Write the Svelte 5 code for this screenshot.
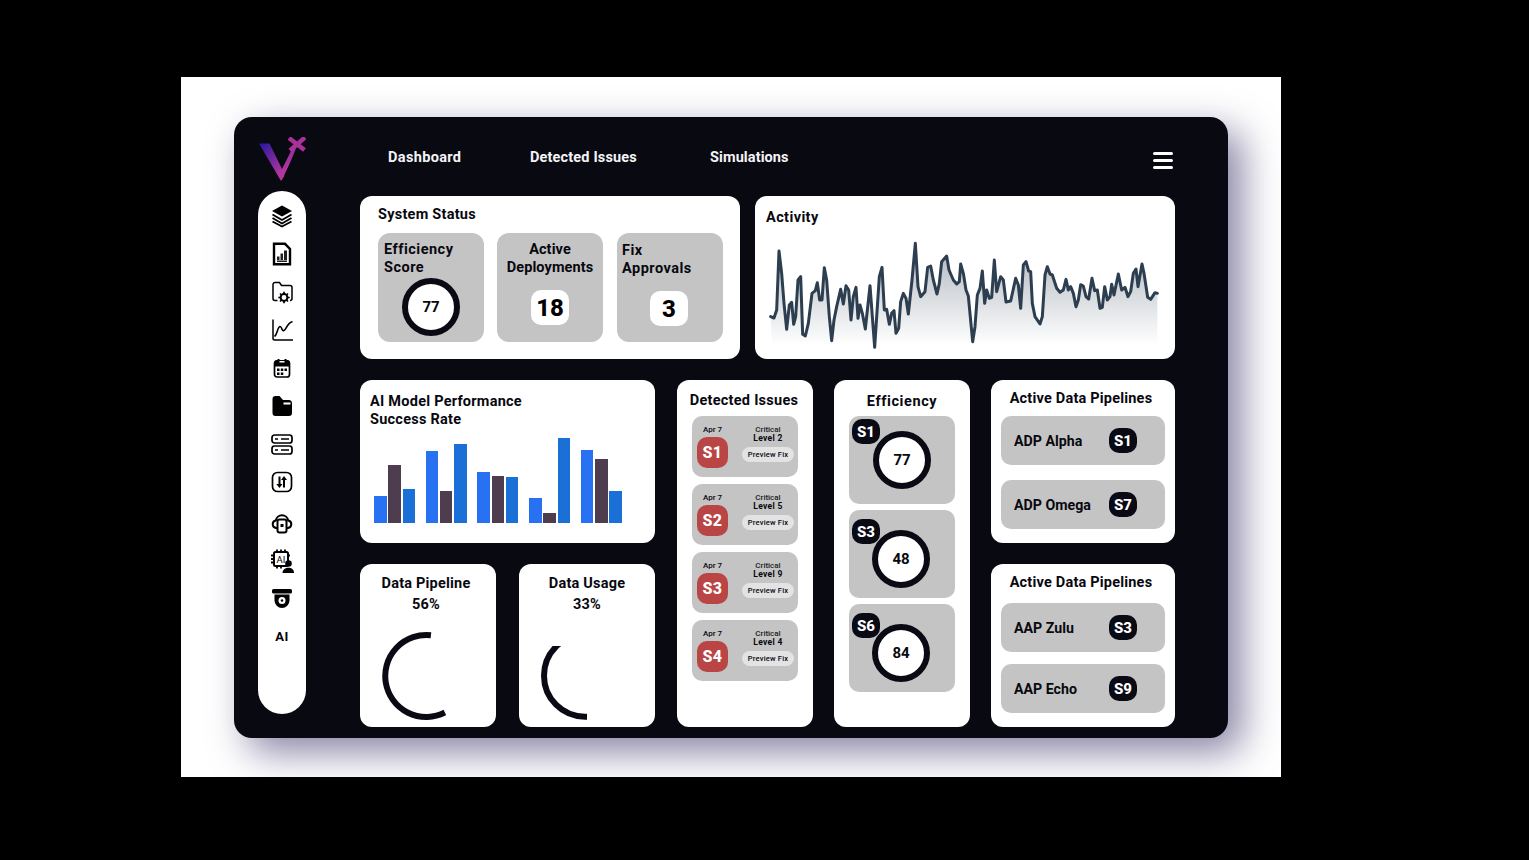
<script>
  const pts = [[62,380],[72,384],[80,360],[87,183],[95,250],[102,340],[110,418],[118,345],[125,337],[131,403],[137,380],[144,270],[152,260],[158,433],[166,438],[175,400],[186,310],[196,302],[202,278],[209,330],[216,330],[223,233],[230,270],[238,380],[245,452],[252,390],[260,350],[272,298],[280,342],[288,287],[296,300],[303,390],[310,320],[318,292],[324,385],[330,345],[337,370],[346,417],[360,287],[374,472],[388,260],[396,232],[403,360],[410,358],[418,403],[425,370],[432,362],[438,430],[446,415],[452,335],[460,310],[468,325],[475,372],[486,270],[496,160],[504,290],[512,320],[525,305],[533,232],[542,228],[550,270],[561,312],[568,280],[575,215],[590,198],[597,240],[610,270],[620,282],[628,275],[632,222],[640,250],[648,300],[655,318],[668,455],[675,410],[682,315],[690,295],[697,243],[704,340],[710,300],[718,325],[725,322],[733,210],[740,305],[752,260],[760,270],[768,336],[782,333],[797,265],[805,285],[812,355],[820,225],[828,215],[836,243],[842,245],[847,340],[855,380],[870,402],[877,380],[885,255],[892,230],[900,252],[907,255],[920,295],[930,307],[940,300],[948,268],[955,300],[962,290],[970,310],[978,350],[985,330],[992,284],[1000,288],[1008,320],[1016,327],[1026,265],[1034,302],[1042,300],[1050,355],[1057,352],[1064,290],[1072,330],[1080,320],[1085,283],[1092,315],[1105,252],[1115,300],[1125,292],[1134,320],[1142,305],[1150,250],[1158,237],[1164,290],[1176,222],[1182,250],[1193,322],[1202,328],[1215,308],[1222,310]];
  const line = pts.map((p) => p.join(',')).join(' ');
  const area = `66,465 ${line} 1222,465`;

  const bars = [[82,175,101],[215,96,237],[153,140,137],[74,30,254],[218,192,95]];
  const issues = [['S1',2],['S2',5],['S3',9],['S4',4]];
  const eff = [['S1',77],['S3',48],['S6',84]];
</script>

<div class="page">
  <div class="frame">
    <div class="panel">
      <aside class="side">
        <svg class="logo" viewBox="0 0 48 46" aria-label="logo">
          <defs>
            <linearGradient id="vg" x1="0" y1="0" x2="1" y2="1">
              <stop offset="0" stop-color="#23189c" />
              <stop offset=".7" stop-color="#b4359f" />
            </linearGradient>
          </defs>
          <path d="M1 6.500H11.500L24 32L34 12L38 11.500L27 38L23 44Z" fill="url(#vg)" />
          <path d="M26.500 38.500L36 19" stroke="#090912" stroke-width="1" fill="none" />
          <path d="M31 1L46.500 13M47 .5L32 13.500" stroke="#a8329a" stroke-width="4.500" fill="none" />
        </svg>
        <nav class="pill">
          <svg class="ico" viewBox="0 0 24 24"><path d="M12 1.500L22 7L12 12.500L2 7Z" /><path class="ln" d="M2.500 10.500L12 16L21.500 10.500M2.500 14L12 19.500L21.500 14M2.500 17.500L12 22.500L21.500 17.500" stroke-width="1.900" /></svg>
          <svg class="ico" viewBox="0 0 24 24"><path class="ln" d="M4 1.800H15L20 7V22.200H4Z" stroke-width="2.400" /><path d="M7 18H9.500V14.500H7ZM10.500 18H13V11.500H10.500ZM14 18H17V8.500H14ZM7 18.500H17V20H7Z" fill="#222" /></svg>
          <svg class="ico" viewBox="0 0 24 24"><path class="ln" d="M7.500 20.500H5A2 2 0 0 1 3 18.500V4.500A2 2 0 0 1 5 2.500H9.500L11.500 5.500H20A2 2 0 0 1 22 7.500V18.500A2 2 0 0 1 20 20.500H20" stroke-width="1.500" /><circle class="ln" cx="14" cy="17.500" r="3.400" stroke-width="2" /><path class="ln" d="M14 11.800V14M14 21V23.200M8.300 17.500H10.500M17.500 17.500H19.700M10 13.500L11.500 15M16.500 20L18 21.500M10 21.500L11.500 20M16.500 15L18 13.500" stroke-width="1.700" /></svg>
          <svg class="ico" viewBox="0 0 24 24"><path class="ln" d="M3 1.500V20.500Q3 22 5 22H23" stroke-width="1.500" /><path class="ln" d="M4.500 18.500C7 17 7.500 9 10 8.500C12 8.200 11.500 13.500 14 12.500C16.500 11.500 16.500 5.500 22.500 3.500" stroke-width="1.600" /></svg>
          <svg class="ico" viewBox="0 0 24 24"><rect class="ln" x="4.500" y="5" width="15" height="16" rx="2.500" stroke-width="1.700" /><path d="M4 7A3 3 0 0 1 7 4H17A3 3 0 0 1 20 7V10.500H4Z" /><rect x="7.500" y="3" width="2" height="3.500" /><rect x="14.500" y="3" width="2" height="3.500" /><rect class="wh" x="9.500" y="5" width="5" height="1.500" /><path d="M7 12.500h2.500v2.500h-2.500zM10.800 12.500h2.500v2.500h-2.500zM14.500 12.500h2.500v2.500h-2.500zM7 16.500h2.500v2.500h-2.500zM10.800 16.500h2.500v2.500h-2.500z" /></svg>
          <svg class="ico" viewBox="0 0 24 24"><path d="M2.500 5A3 3 0 0 1 5.500 2H9.500L13 6H19.500A3 3 0 0 1 22 9V19A3 3 0 0 1 19 22H5.500A3 3 0 0 1 2.500 19Z" /><rect class="wh" x="13.500" y="8.500" width="7" height="2" /></svg>
          <svg class="ico" viewBox="0 0 24 24"><rect class="ln" x="2" y="3" width="20" height="8" rx="2.500" stroke-width="1.700" /><rect class="ln" x="2" y="14" width="20" height="8" rx="2.500" stroke-width="1.700" /><path class="ln" d="M5 7H8M11 7H19M5 18H8M11 18H19" stroke-width="1.400" /></svg>
          <svg class="ico" viewBox="0 0 24 24"><rect class="ln" x="2.500" y="2.500" width="19" height="19" rx="5" stroke-width="1.700" /><path d="M9 6.500V14H6.800L10 18L13 14H11V6.500ZM13.500 10H11.500L14.500 6L17.500 10H15.500V17.500H13.500Z" transform="translate(-.5 0)" /></svg>
          <svg class="ico gap" viewBox="0 0 24 24"><path class="ln" d="M7.500 17H6A3.800 3.800 0 0 1 5.800 9.500A6.300 6.300 0 0 1 18.200 9.500A3.800 3.800 0 0 1 18 17H16.500" stroke-width="2" /><rect class="ln" x="7.500" y="8.500" width="9" height="13" rx="2" stroke-width="2" /><rect x="10.500" y="13" width="3" height="3" /></svg>
          <svg class="ico" viewBox="0 0 24 24"><rect class="ln" x="4" y="3" width="14" height="14" rx="1.500" stroke-width="2" /><path class="ln" d="M7 .5V3M11 .5V3M15 .5V3M7 17V19.500M11 17V19.500M1 6.500H4M1 10H4M1 13.500H4M18 6.500H20" stroke-width="1.800" /><text class="chip" x="11" y="13.700" text-anchor="middle">AI</text><circle cx="18.500" cy="14.500" r="3.300" /><path d="M12.500 24C12.500 20.500 15.500 18.800 18.500 18.800C21.500 18.800 24 20.500 24 24Z" /></svg>
          <svg class="ico" viewBox="0 0 24 24"><rect x="2" y="2" width="20" height="4.500" rx="1.500" /><path d="M4.500 7.500H19.500V13.500A7.500 7.500 0 0 1 4.500 13.500Z" /><circle class="wh" cx="12" cy="13.500" r="3.500" /><circle cx="12" cy="13.500" r="1.200" /></svg>
          <span class="ai">AI</span>
        </nav>
      </aside>

      <main class="main">
        <header class="top">
          <nav class="links">
            <span class="l1">Dashboard</span>
            <span class="l2">Detected Issues</span>
            <span class="l3">Simulations</span>
          </nav>
          <div class="burger"><i></i><i></i><i></i></div>
        </header>

        <section class="row1">
          <div class="card status">
            <h3>System Status</h3>
            <div class="tiles">
              <div class="tile t1">
                <p>Efficiency<br />Score</p>
                <div class="ring">77</div>
              </div>
              <div class="tile t2">
                <p class="ctr">Active<br />Deployments</p>
                <div class="num">18</div>
              </div>
              <div class="tile t3">
                <p>Fix<br />Approvals</p>
                <div class="num">3</div>
              </div>
            </div>
          </div>
          <div class="card activity">
            <h3>Activity</h3>
            <svg class="spark" viewBox="48 141 1200 351">
              <defs>
                <linearGradient id="ag" gradientUnits="userSpaceOnUse" x1="0" y1="160" x2="0" y2="465">
                  <stop offset="0" stop-color="#2c3e50" stop-opacity=".38" />
                  <stop offset="1" stop-color="#2c3e50" stop-opacity="0" />
                </linearGradient>
              </defs>
              <polygon points={area} fill="url(#ag)" />
              <polyline points={line} fill="none" stroke="#2c3e50" stroke-width="9" stroke-linejoin="round" stroke-linecap="round" />
            </svg>
          </div>
        </section>

        <section class="row2">
          <div class="col-left">
            <div class="card model">
              <h3>AI Model Performance<br />Success Rate</h3>
              <div class="chart">
                {#each bars as g}
                  <div class="group">
                    {#each g as h, i}
                      <div class="bar b{i}" style="height:{h / 3}px"></div>
                    {/each}
                  </div>
                {/each}
              </div>
            </div>
            <div class="gauges">
              <div class="card gauge g1">
                <h3>Data Pipeline<br />56%</h3>
                <svg class="arc a1" width="66" height="94" viewBox="0 0 66 94"><path d="M50.940 5.260A41 41 0 1 0 64.900 82.500" /></svg>
              </div>
              <div class="card gauge">
                <h3>Data Usage<br />33%</h3>
                <svg class="arc a2" width="47" height="76" viewBox="0 0 47 76"><circle cx="45" cy="29.700" r="41" /></svg>
              </div>
            </div>
          </div>

          <div class="card issues">
            <h3>Detected Issues</h3>
            {#each issues as [s, lvl]}
              <div class="issue">
                <div class="i-left">
                  <span class="date">Apr 7</span>
                  <span class="sev">{s}</span>
                </div>
                <div class="i-right">
                  <span class="crit">Critical</span>
                  <span class="lvl">Level {lvl}</span>
                  <span class="fix">Preview Fix</span>
                </div>
              </div>
            {/each}
          </div>

          <div class="card effic">
            <h3>Efficiency</h3>
            {#each eff as [s, v], i}
              <div class="etile" class:low={i > 0}>
                <span class="tag">{s}</span>
                <div class="ring">{v}</div>
              </div>
            {/each}
          </div>

          <div class="col-right">
            <div class="card pipes">
              <h3>Active Data Pipelines</h3>
              <div class="prow p-gap"><span>ADP Alpha</span><b class="tag">S1</b></div>
              <div class="prow"><span>ADP Omega</span><b class="tag">S7</b></div>
            </div>
            <div class="card pipes second">
              <h3>Active Data Pipelines</h3>
              <div class="prow p-gap2"><span>AAP Zulu</span><b class="tag">S3</b></div>
              <div class="prow"><span>AAP Echo</span><b class="tag">S9</b></div>
            </div>
          </div>
        </section>
      </main>
    </div>
  </div>
</div>

<style>
  :global(body) { margin: 0; background: #000; }
  .page {
    box-sizing: border-box;
    height: 860px;
    padding: 77px 0 0 181px;
    background: #000;
    overflow: hidden;
    font-family: Roboto, "Liberation Sans", sans-serif;
    color: #08080f;
  }
  .frame {
    box-sizing: border-box;
    width: 1100px;
    height: 700px;
    padding: 40px 0 0 53px;
    background: #fff;
    overflow: hidden;
  }
  .panel {
    display: flex;
    width: 994px;
    height: 621px;
    border-radius: 18px;
    background: #090912;
    box-shadow: 14px 14px 38px rgba(38, 30, 90, 0.55);
  }
  h3, p { margin: 0; font-weight: 700; }

  .side { width: 126px; padding: 20px 0 0 24px; box-sizing: border-box; flex: none; }
  .logo { display: block; width: 48px; height: 46px; margin-bottom: 8px; }
  .pill {
    display: flex;
    flex-direction: column;
    align-items: center;
    box-sizing: border-box;
    width: 48px;
    height: 523px;
    padding-top: 13px;
    border-radius: 24px;
    background: #fff;
  }
  .ico { display: block; flex: none; width: 24px; height: 24px; margin-bottom: 14px; fill: #000; }
  .ico.gap { margin-top: 3px; }
  .ln { fill: none; stroke: #000; }
  .wh { fill: #fff; }
  .chip { font-size: 9.500px; font-weight: 400; fill: #000; }
  .ai { font-size: 13px; font-weight: 700; line-height: 14px; margin-top: 5px; color: #000; letter-spacing: 0.5px; }

  .main { width: 815px; flex: none; }
  .top { display: flex; justify-content: space-between; align-items: flex-start; height: 79px; }
  .links { padding: 32px 0 0 28px; display: flex; color: #f4f4f6; font-weight: 700; font-size: 14.500px; line-height: 18px; }
  .l1 { width: 142px; letter-spacing: 0.35px; }
  .l2 { width: 180px; letter-spacing: 0.15px; }
  .l3 { letter-spacing: 0.1px; }
  .burger { display: flex; flex-direction: column; gap: 4px; padding: 35px 2px 0 0; }
  .burger i { display: block; width: 20px; height: 3px; border-radius: 2px; background: #fff; }

  .card { background: #fff; border-radius: 12px; box-sizing: border-box; }
  h3 { font-size: 14.500px; line-height: 18px; letter-spacing: 0.25px; }

  .row1 { display: flex; gap: 15px; }
  .status { width: 380px; height: 163px; padding: 10px 17px 0 18px; }
  .tiles { display: flex; margin-top: 9px; }
  .tile { position: relative; flex: none; width: 106px; height: 109px; border-radius: 12px; background: #c4c4c4; box-sizing: border-box; padding: 8px 6px 0; margin-right: 13px; }
  .t2 { margin-right: 14px; padding: 8px 0 0; }
  .tile p { font-size: 14.500px; line-height: 18px; letter-spacing: 0.5px; }
  .tile .ctr { text-align: center; letter-spacing: 0.1px; }
  .t3 { padding-left: 5px; }
  .t3 p { padding-top: 1px; }
  .ring {
    box-sizing: border-box;
    width: 58px;
    height: 58px;
    border: 6px solid #0a0a14;
    border-radius: 50%;
    background: #fff;
    display: flex;
    align-items: center;
    justify-content: center;
    font-size: 15px;
    font-weight: 700;
  }
  .t1 .ring { margin: 1px 0 0 18px; }
  .num {
    width: 38px;
    height: 35px;
    margin: 13px auto 0;
    border-radius: 10px;
    background: #fff;
    display: flex;
    align-items: center;
    justify-content: center;
    font-size: 24px;
    font-weight: 800;
    color: #000;
  }
  .t3 .num { margin-top: 13px; margin-left: 28px; }

  .activity { width: 420px; height: 163px; padding: 13px 0 0 11px; }
  .activity h3 { letter-spacing: 0.4px; }
  .spark { display: block; width: 400px; height: 117px; margin-top: 10px; }

  .row2 { display: flex; margin-top: 21px; height: 347px; }
  .col-left { width: 295px; flex: none; margin-right: 22px; }
  .model { height: 163px; padding: 13px 0 0 10px; }
  .chart { display: flex; align-items: flex-end; gap: 10.600px; height: 85px; margin: 9px 0 0 4px; }
  .group { display: flex; align-items: flex-end; gap: 1.800px; }
  .bar { width: 12.500px; }
  .b0 { background: #2871f3; }
  .b1 { background: #4e3c4f; }
  .b2 { background: #1a70d6; }

  .gauges { display: flex; gap: 23px; margin-top: 21px; }
  .gauge { position: relative; width: 136px; height: 163px; padding-top: 9px; text-align: center; }
  .gauge h3 { line-height: 21px; letter-spacing: 0.2px; }
  .g1 { padding-right: 4px; }
  .arc { position: absolute; fill: none; stroke: #0a0a14; stroke-width: 6; }
  .a1 { left: 20px; top: 66px; }
  .a2 { left: 21px; top: 82px; }

  .issues { width: 136px; height: 347px; padding: 11px 15px 0; flex: none; margin-right: 21px; }
  .issues h3 { margin: 0 -5px 6px -7px; text-align: center; white-space: nowrap; line-height: 19px; }
  .issue { box-sizing: border-box; height: 61px; width: 106px; margin-bottom: 7px; padding: 8px 4px 0 5px; background: #c4c4c4; border-radius: 10px; display: flex; justify-content: space-between; }
  .i-left { display: flex; flex-direction: column; align-items: center; width: 31px; }
  .date { font-size: 8px; line-height: 10px; font-weight: 500; position: relative; top: 1px; }
  .sev { width: 31px; height: 31px; margin-top: 3px; border-radius: 10px; background: #b94545; color: #fff; display: flex; align-items: center; justify-content: center; font-size: 16px; font-weight: 800; letter-spacing: 0.3px; }
  .i-right { display: flex; flex-direction: column; align-items: center; width: 52px; padding-top: 1px; }
  .crit { font-size: 8px; line-height: 9px; font-weight: 500; color: #222; }
  .lvl { font-size: 8.500px; line-height: 9px; font-weight: 700; letter-spacing: 0.3px; }
  .fix { width: 52px; height: 15px; margin-top: 4px; border-radius: 8px; background: #e3e3e3; display: flex; align-items: center; justify-content: center; font-size: 7.500px; font-weight: 500; letter-spacing: 0.2px; white-space: nowrap; }

  .effic { width: 136px; height: 347px; padding: 12px 15px 0; flex: none; margin-right: 21px; }
  .effic h3 { text-align: center; margin-bottom: 5px; line-height: 19px; letter-spacing: 0.6px; }
  .etile { position: relative; width: 106px; height: 88px; margin-bottom: 6px; border-radius: 10px; background: #c4c4c4; display: flex; align-items: center; justify-content: center; }
  .etile.low .ring { margin: 10px 2px 0 0; }
  .tag {
    width: 28px;
    height: 25px;
    border-radius: 10px;
    background: #0a0a14;
    color: #fff;
    display: flex;
    align-items: center;
    justify-content: center;
    font-size: 15px;
    font-weight: 800;
  }
  .etile .tag { position: absolute; left: 3px; top: 3px; z-index: 1; }
  .etile.low .tag { top: 9px; }

  .col-right { width: 184px; flex: none; }
  .pipes { height: 163px; padding: 10px 10px 0; }
  .pipes h3 { text-align: center; padding-right: 4px; line-height: 18px; margin-bottom: 8px; white-space: nowrap; letter-spacing: 0.2px; }
  .second { margin-top: 21px; }
  .second h3 { margin-bottom: 11px; }
  .prow { box-sizing: border-box; height: 49px; padding: 0 28px 0 13px; border-radius: 10px; background: #c4c4c4; display: flex; align-items: center; justify-content: space-between; font-size: 14.200px; font-weight: 700; }
  .p-gap { margin-bottom: 15px; }
  .p-gap2 { margin-bottom: 12px; }
</style>
